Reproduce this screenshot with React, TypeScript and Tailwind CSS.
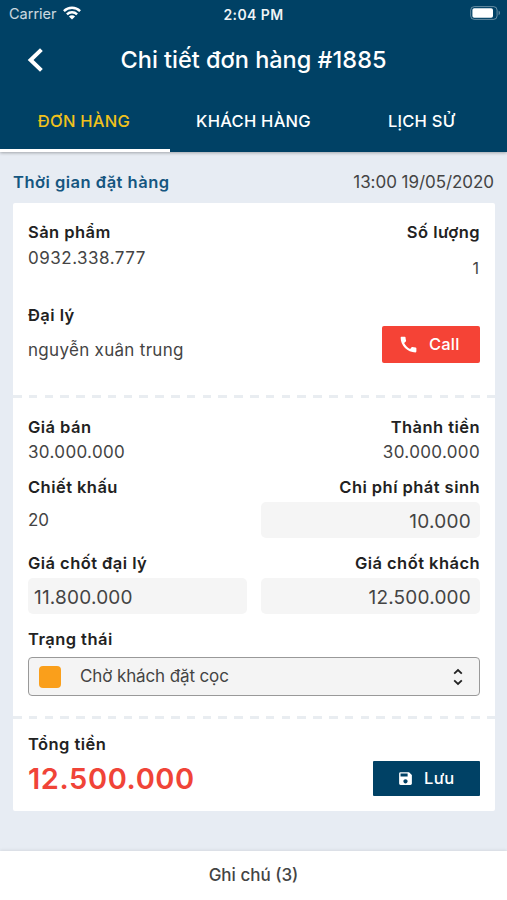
import type { ReactNode } from "react"
import { MdCall, MdSave } from "react-icons/md"

function Label({ children, className = "" }: { children: ReactNode; className?: string }) {
  return (
    <div
      className={`h-6 text-[16.5px] leading-6 font-semibold tracking-[0.45px] whitespace-nowrap text-[#222222] ${className}`}
    >
      {children}
    </div>
  )
}

function DashedLine() {
  return (
    <div className="h-[3px] bg-[repeating-linear-gradient(90deg,#e9edf1_0px,#e9edf1_8.5px,transparent_8.5px,transparent_15.8px)]" />
  )
}

function StatusBar() {
  return (
    <div className="grid h-7 grid-cols-3 items-center pr-[6px] pl-[9px]">
      <div className="flex items-center gap-[6px]">
        <span className="text-[14.5px] text-white/80">Carrier</span>
        <svg className="-mt-[2px]" width="18" height="14" viewBox="0 0 18 14" fill="none" stroke="white" strokeWidth="2.4">
          <path d="M0.9 5.1A11.6 11.6 0 0 1 17.1 5.1" />
          <path d="M3.9 8.3A7.3 7.3 0 0 1 14.1 8.3" />
          <path d="M9 13.5L5.9 10.5A4.3 4.3 0 0 1 12.1 10.5Z" fill="white" stroke="none" />
        </svg>
      </div>
      <span className="-ml-[3px] text-center text-[14px] font-semibold tracking-[0.4px] text-white/95">2:04 PM</span>
      <svg className="-mt-[2px] justify-self-end" width="31" height="14" viewBox="0 0 31 14" fill="none">
        <rect x="0.7" y="0.6" width="26.4" height="12.8" rx="3.6" stroke="white" strokeOpacity="0.4" />
        <rect x="2.4" y="2.2" width="20.6" height="9.6" rx="1.8" fill="white" />
        <path d="M28.6 4.8C30.4 5.4 30.4 8.6 28.6 9.2Z" fill="white" fillOpacity="0.4" />
      </svg>
    </div>
  )
}

function Header() {
  return (
    <header className="relative z-10 h-[152px] bg-[#004165] text-white shadow-[0_1px_3px_rgba(0,0,0,0.3)]">
      <StatusBar />

      <div className="grid h-16 grid-cols-[60px_1fr_60px] items-center">
        <svg className="ml-[27px]" width="17" height="24" viewBox="0 0 17 24" fill="none" stroke="white" strokeWidth="4">
          <path d="M14.4 1.6L3.6 12L14.4 22.4" />
        </svg>
        <h1 className="text-center text-[23.5px] font-medium whitespace-nowrap">Chi tiết đơn hàng #1885</h1>
      </div>

      <nav className="grid h-[60px] grid-cols-3 pb-px text-[16.5px] font-medium tracking-[0.25px]">
        <button className="-mb-px w-[170px] border-b-3 border-white pt-[2px] pr-[2px] text-[#f0c11c]">ĐƠN HÀNG</button>
        <button>KHÁCH HÀNG</button>
        <button className="pr-[2px]">LỊCH SỬ</button>
      </nav>
    </header>
  )
}

export default function App() {
  return (
    <div className="flex h-[900px] w-[507px] flex-col overflow-hidden bg-[#e7ecf3] font-['Inter',sans-serif] text-[17px] text-[#444444]">
      <Header />

      <main className="flex-1 px-[13px]">
        <div className="flex h-[51px] items-center justify-between pt-[9px]">
          <span className="text-[16.5px] font-semibold tracking-[0.5px] text-[#155680]">Thời gian đặt hàng</span>
          <span className="pt-[2px] text-[17px] tracking-[-0.05px]">13:00 19/05/2020</span>
        </div>

        <section className="h-[608px] w-[482px] rounded-[2px] bg-white">
          {/* Product and agent */}
          <div className="h-[192px] px-[15px] pt-[17px]">
            <div className="flex h-[83px] justify-between">
              <div>
                <Label>Sản phẩm</Label>
                <div className="pt-px leading-[26px] tracking-[0.5px]">0932.338.777</div>
              </div>
              <div className="text-right">
                <Label>Số lượng</Label>
                <div className="pt-3 pr-px text-[16px] leading-6">1</div>
              </div>
            </div>
            <Label>Đại lý</Label>
            <div className="flex h-[36px] items-center justify-between">
              <span className="pt-[12px] tracking-[0.3px]">nguyễn xuân trung</span>
              <button className="-mt-px flex h-[37px] w-[98px] items-center rounded-[2px] bg-[#f54336] pl-[16px] text-white">
                <MdCall size={21} />
                <span className="ml-[10px] text-[16.5px] font-medium tracking-[0.2px]">Call</span>
              </button>
            </div>
          </div>

          <DashedLine />

          {/* Prices */}
          <div className="h-[318px] px-[15px] pt-[17px]">
            <div className="flex h-[60px] justify-between">
              <div>
                <Label>Giá bán</Label>
                <div className="leading-[26px] tracking-[0.35px]">30.000.000</div>
              </div>
              <div className="text-right">
                <Label>Thành tiền</Label>
                <div className="leading-[26px] tracking-[0.35px]">30.000.000</div>
              </div>
            </div>

            <div className="grid h-[76px] grid-cols-2 gap-[14px]">
              <div>
                <Label>Chiết khấu</Label>
                <div className="mt-[3px] flex h-9 items-center pt-[2px]">20</div>
              </div>
              <div>
                <Label className="text-right">Chi phí phát sinh</Label>
                <div className="mt-[3px] flex h-9 items-center justify-end rounded-[5px] bg-[#f5f5f5] pt-[5px] pr-[9px] text-[19px] tracking-[0.25px]">
                  10.000
                </div>
              </div>
            </div>

            <div className="grid h-[76px] grid-cols-2 gap-[14px]">
              <div>
                <Label>Giá chốt đại lý</Label>
                <div className="mt-[3px] flex h-9 items-center rounded-[5px] bg-[#f5f5f5] pt-[5px] pl-[6px] text-[19px] tracking-[0.2px]">
                  11.800.000
                </div>
              </div>
              <div>
                <Label className="text-right">Giá chốt khách</Label>
                <div className="mt-[3px] flex h-9 items-center justify-end rounded-[5px] bg-[#f5f5f5] pt-[5px] pr-[9px] text-[19px] tracking-[0.2px]">
                  12.500.000
                </div>
              </div>
            </div>

            <Label>Trạng thái</Label>
            <div className="mt-[6px] flex h-[39px] items-center rounded-[4px] border border-[#999999] bg-[#f4f4f4] pr-[16px] pl-[10px]">
              <div className="size-[22px] rounded-[4px] bg-[#fa9f1b]" />
              <span className="ml-[19px] flex-1 tracking-[-0.12px]">Chờ khách đặt cọc</span>
              <svg width="10" height="18" viewBox="0 0 10 18" fill="none" stroke="#222222" strokeWidth="1.8">
                <path d="M1.2 5.6L5 2L8.8 5.6" />
                <path d="M1.2 12.4L5 16L8.8 12.4" />
              </svg>
            </div>
          </div>

          <DashedLine />

          {/* Total */}
          <div className="px-[15px] pt-[13px]">
            <Label>Tổng tiền</Label>
            <div className="flex h-[46px] items-center justify-between">
              <span className="text-[29px] font-semibold tracking-[0.6px] text-[#f04438]">12.500.000</span>
              <button className="-mt-px flex h-[35px] w-[107px] items-center rounded-[1px] bg-[#004165] pl-[24px] text-white">
                <MdSave size={17} />
                <span className="ml-[10px] text-[16.5px] font-medium tracking-[0.3px]">Lưu</span>
              </button>
            </div>
          </div>
        </section>
      </main>

      <footer className="flex h-[49px] items-center justify-center bg-white pt-px text-[17px] font-medium shadow-[0_-1px_3px_rgba(0,0,0,0.08)]">
        Ghi chú (3)
      </footer>
    </div>
  )
}
